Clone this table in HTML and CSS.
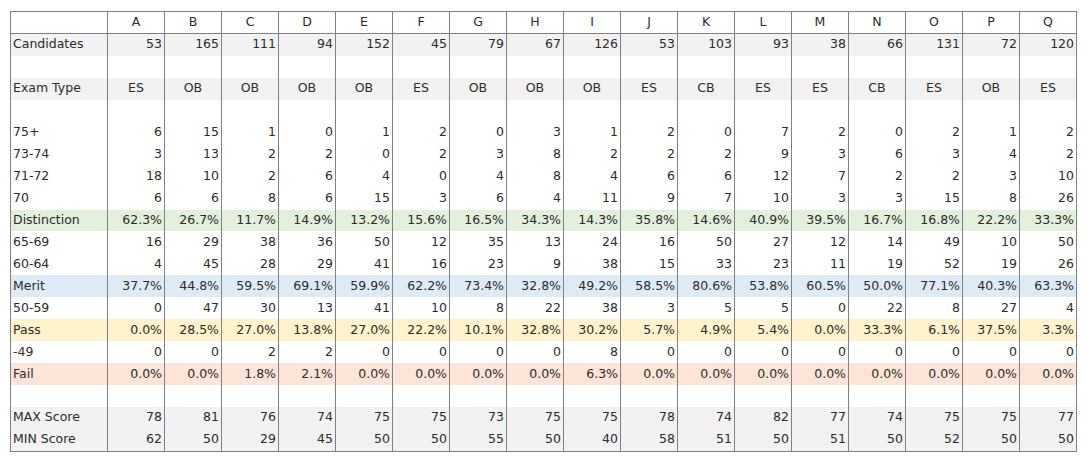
FILE: index.html
```html
<!DOCTYPE html>
<html>
<head>
<meta charset="utf-8">
<link rel="stylesheet" href="styles.css">
</head>
<body>
<table class="grid">
<colgroup><col class="c-label"><col span="17" class="c-val"></colgroup>
<thead>
<tr class="hdr"><th></th><th>A</th><th>B</th><th>C</th><th>D</th><th>E</th><th>F</th><th>G</th><th>H</th><th>I</th><th>J</th><th>K</th><th>L</th><th>M</th><th>N</th><th>O</th><th>P</th><th>Q</th></tr>
</thead>
<tbody id="body"></tbody>
</table>
<script src="app.js"></script>
</body>
</html>
```
FILE: app.js
```js
var rows = [
  ["Candidates","gray","53 165 111 94 152 45 79 67 126 53 103 93 38 66 131 72 120"],
  ["","",""],
  ["Exam Type","gray center","ES OB OB OB OB ES OB OB OB ES CB ES ES CB ES OB ES"],
  ["","",""],
  ["75+","","6 15 1 0 1 2 0 3 1 2 0 7 2 0 2 1 2"],
  ["73-74","","3 13 2 2 0 2 3 8 2 2 2 9 3 6 3 4 2"],
  ["71-72","","18 10 2 6 4 0 4 8 4 6 6 12 7 2 2 3 10"],
  ["70","","6 6 8 6 15 3 6 4 11 9 7 10 3 3 15 8 26"],
  ["Distinction","green","62.3% 26.7% 11.7% 14.9% 13.2% 15.6% 16.5% 34.3% 14.3% 35.8% 14.6% 40.9% 39.5% 16.7% 16.8% 22.2% 33.3%"],
  ["65-69","","16 29 38 36 50 12 35 13 24 16 50 27 12 14 49 10 50"],
  ["60-64","","4 45 28 29 41 16 23 9 38 15 33 23 11 19 52 19 26"],
  ["Merit","blue","37.7% 44.8% 59.5% 69.1% 59.9% 62.2% 73.4% 32.8% 49.2% 58.5% 80.6% 53.8% 60.5% 50.0% 77.1% 40.3% 63.3%"],
  ["50-59","","0 47 30 13 41 10 8 22 38 3 5 5 0 22 8 27 4"],
  ["Pass","yellow","0.0% 28.5% 27.0% 13.8% 27.0% 22.2% 10.1% 32.8% 30.2% 5.7% 4.9% 5.4% 0.0% 33.3% 6.1% 37.5% 3.3%"],
  ["-49","","0 0 2 2 0 0 0 0 8 0 0 0 0 0 0 0 0"],
  ["Fail","salmon","0.0% 0.0% 1.8% 2.1% 0.0% 0.0% 0.0% 0.0% 6.3% 0.0% 0.0% 0.0% 0.0% 0.0% 0.0% 0.0% 0.0%"],
  ["","",""],
  ["MAX Score","gray","78 81 76 74 75 75 73 75 75 78 74 82 77 74 75 75 77"],
  ["MIN Score","gray","62 50 29 45 50 50 55 50 40 58 51 50 51 50 52 50 50"]
];
var tb = document.getElementById("body");
rows.forEach(function (r) {
  var tr = document.createElement("tr");
  if (r[1]) tr.className = r[1];
  var th = document.createElement("td");
  th.className = "lbl";
  th.textContent = r[0];
  tr.appendChild(th);
  var vals = r[2] ? r[2].split(" ") : [];
  for (var i = 0; i < 17; i++) {
    var td = document.createElement("td");
    td.textContent = vals[i] || "";
    tr.appendChild(td);
  }
  tb.appendChild(tr);
});
```
FILE: styles.css
```css
html, body { margin: 0; padding: 0; background: #fff; }
body { padding: 11px 0 0 10px; }
.grid {
  border-collapse: separate;
  border-spacing: 0;
  table-layout: fixed;
  width: 1067px;
  border-left: 1px solid #808080;
  border-top: 1px solid #808080;
  border-bottom: 1px solid #808080;
  font-family: "DejaVu Sans", Verdana, sans-serif;
  font-size: 12.5px;
  line-height: 14px;
  color: #2b2b2b;
}
.c-label { width: 97px; }
.c-val { width: 57px; }
.grid th, .grid td {
  border-right: 1px solid #808080;
  padding: 0 2px 1px 2px;
  height: 21.95px;
  box-sizing: border-box;
  white-space: nowrap;
  overflow: hidden;
  text-align: right;
  font-weight: normal;
}
.grid th { text-align: center; height: 22px; border-bottom: 1px solid #808080; }
.grid td.lbl { text-align: left; padding-left: 2px; }
.center td { text-align: center; }
.center td.lbl { text-align: left; }
.gray td { background: #f2f2f2; }
.green td { background: #e2efda; }
.blue td { background: #ddebf7; }
.yellow td { background: #fff2cc; }
.salmon td { background: #fce4d6; }
```
